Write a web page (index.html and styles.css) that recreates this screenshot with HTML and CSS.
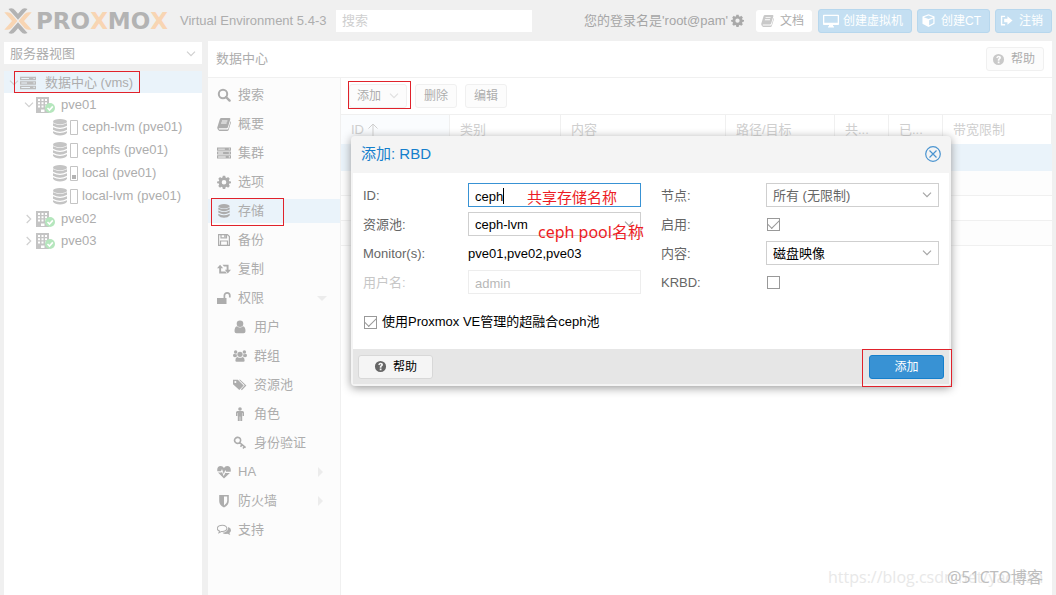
FILE: index.html
```
<!DOCTYPE html>
<html lang="zh-CN">
<head>
<meta charset="utf-8">
<title>Proxmox Virtual Environment</title>
<link rel="stylesheet" href="styles.css">
</head>
<body>
<svg class="defs" aria-hidden="true">
<symbol id="search" viewBox="0 0 14 14"><circle cx="6" cy="6" r="4.2" fill="none" stroke="currentColor" stroke-width="2"/><path d="M9 9l3.6 3.6" stroke="currentColor" stroke-width="2.4" stroke-linecap="round"/></symbol>
<symbol id="book" viewBox="0 0 14 14"><path fill-rule="evenodd" d="M4.300 1h8.200q1.100.3.8 1.300l-2.400 8q-.4 1-1.400 1H2.200q-.6 0-.5.6.2.6 1 .6h7.800q.6 0 .8-.7l2.300-7.500q.7.5.3 1.400l-2.200 7q-.4 1.300-1.600 1.300H2.400Q.6 13 .3 11.200q-.1-.8.2-1.500L2.900 2q.4-1 1.400-1zM5 3.400l-.3 1h5.500l.3-1zm-.7 2.200l-.3 1h5.500l.3-1z"/></symbol>
<symbol id="server" viewBox="0 0 16 14"><path fill-rule="evenodd" d="M0 .8h16v3.500H0zM1.300 2v1H9V2zM13.500 1.900v1.200h1.200V1.900zM0 5.300h16v3.400H0zm1.300 1.200v1H7v-1zm12.200-.2v1.200h1.200V6.300zM0 9.700h16v3.500H0zM1.300 11v1H10v-1zm12.200-.2V12h1.200v-1.200z"/></symbol>
<symbol id="gear" viewBox="0 0 14 14"><path fill-rule="evenodd" d="M5.800.8h2.400l.4 1.700 1 .4L11.100 2l1.700 1.700-.9 1.500.4 1 1.700.3V8.200l-1.700.4-.4 1 .9 1.400-1.700 1.700-1.500-.9-1 .4-.4 1.700H5.800l-.4-1.700-1-.4-1.400.9L1.300 11l.9-1.400-.4-1L.1 8.200V6.500l1.700-.3.4-1-.9-1.500L3 2l1.400.9 1-.4zM7 4.900a2.300 2.300 0 100 4.600 2.300 2.300 0 000-4.600z"/></symbol>
<symbol id="database" viewBox="0 0 14 16"><ellipse cx="7" cy="2.500" rx="6.500" ry="2.500"/><path d="M.5 4q6.500 3.500 13 0v2.300q-6.500 4-13 0zM.5 7.500q6.500 3.500 13 0v2.300q-6.500 4-13 0zM.5 11q6.500 3.500 13 0v2q-2 2.700-6.500 2.700T.5 13z"/></symbol>
<symbol id="floppy" viewBox="0 0 14 14"><path fill="none" stroke="currentColor" stroke-width="1.200" d="M1.600 1.600h8.800l2 2v8.800H1.600zM4 1.600v3.200h5.500V1.600M3.500 12.400V8h7v4.400"/><path d="M7.200 1.800h1.500v2.500H7.200z"/></symbol>
<symbol id="retweet" viewBox="0 0 16 14"><path d="M3.500 2L7 6.200H4.700v3.700h5l1.600 2.100H2.500V6.200H0zM6.300 2H13.200v5.800H16l-3.700 4.200L9 7.800h2V4.100H8z"/></symbol>
<symbol id="unlock" viewBox="0 0 14 14"><path d="M0 7h9.500v6H0z"/><path fill="none" stroke="currentColor" stroke-width="1.700" d="M7.400 7V4.500a2.700 2.700 0 015.400 0v2"/></symbol>
<symbol id="user" viewBox="0 0 14 14"><circle cx="7" cy="3.800" r="3.300"/><path d="M4 6.300q3 2.500 6 0 2.500.6 2.500 4.900 0 2.100-2 2.100H3.500q-2 0-2-2.100 0-4.300 2.500-4.900z"/></symbol>
<symbol id="users" viewBox="0 0 16 14"><circle cx="8" cy="5" r="3"/><circle cx="3" cy="2.500" r="2"/><circle cx="13" cy="2.500" r="2"/><path d="M5 8q3 2 6 0 2.300.5 2.300 4 0 1.500-1.500 1.500H4.200Q2.700 13.500 2.700 12 2.700 8.500 5 8zM1.500 4.400q1.300.8 2.600.3 0 1.800 1 2.700-1 .1-1.700.8Q0 8.700 0 6.800q0-2.200 1.500-2.400zm13 0q-1.300.8-2.600.3 0 1.800-1 2.700 1 .1 1.700.8Q16 8.700 16 6.800q0-2.200-1.500-2.400z"/></symbol>
<symbol id="tags" viewBox="0 0 16 14"><path fill-rule="evenodd" d="M0 1h5.500l6.700 6.500-5 5.300L0 6zm2.700 1.300a1.200 1.200 0 100 2.400 1.200 1.200 0 000-2.400z"/><path d="M6.800 1h1.400l7.100 6.500-5.200 5.400-1-1 4.300-4.500z"/></symbol>
<symbol id="male" viewBox="0 0 14 14"><circle cx="7" cy="2" r="1.800"/><path d="M4.500 4h5q1.500 0 1.500 1.500V9H9.600V6h-.4v8H7.300V9.500h-.6V14H4.800V6h-.4v3H3V5.500Q3 4 4.500 4z"/></symbol>
<symbol id="key" viewBox="0 0 14 14"><path fill="none" stroke="currentColor" stroke-width="1.600" d="M6.600 6.600a3 3 0 10-4.600-3.700 3 3 0 004.600 3.700l6 5M9 8.700l-1.500 2M11.500 10.600L10 12.500"/></symbol>
<symbol id="heart" viewBox="0 0 14 14"><path fill-rule="evenodd" d="M7 3Q5.800 1 3.700 1 .2 1.200.2 5q0 .7.2 1.200H4L5 4l1.700 5L8.300 5l.8 1.800h4.500q.3-.8.2-1.800-.2-3.800-3.700-4Q8.200 1 7 3zM1 7.500h3.500L5 6.800l1.700 4.500L8.400 7.500l.2.500h4.300L7 13.500z"/></symbol>
<symbol id="shield" viewBox="0 0 14 14"><path fill-rule="evenodd" d="M2.200 1h9.600v6q0 4-4.800 6.500Q2.200 11 2.200 7zM7 2.600v9Q10.200 9.700 10.200 7V2.600z"/></symbol>
<symbol id="comments" viewBox="0 0 16 14"><path fill="none" stroke="currentColor" stroke-width="1.200" d="M6.200 1.600C-.6 1.600-.9 6.700 2.800 8.200L2.200 10.200l2.800-1.500C13.200 9.400 13.200 1.600 6.200 1.600z"/><path d="M12.800 3.600Q16 4.800 16 7.200q0 1.900-1.800 3.100l1 2.400-3.300-1.400q-4 .6-5.700-1.300 7-.2 6.600-6.400z"/></symbol>
<symbol id="help" viewBox="0 0 14 14"><path fill-rule="evenodd" d="M7 1a6 6 0 100 12A6 6 0 007 1zM4.500 5.200Q5 3 7.200 3q2.500.2 2.500 2.200 0 1.200-1.600 2v1.100H6.200Q6 6.500 7.100 6q1.300-.8.200-1.300-.8-.3-1.300 1zM6.200 9.200h1.900V11H6.200z"/></symbol>
<symbol id="desktop" viewBox="0 0 16 14"><path fill-rule="evenodd" d="M.8.800h14.400q.8 0 .8.800v8.600q0 .8-.8.800H10v1.200h1V13.500H5V12.200h1V11H.8Q0 11 0 10.200V1.600Q0 .8.800.8zM1.300 2v6.700h13.400V2z"/></symbol>
<symbol id="cube" viewBox="0 0 14 14"><path fill-rule="evenodd" d="M7 .3l6.500 2.500v7.800L7 13.900.5 10.600V2.800zm0 1.300L2 3.500l5 2 5-2zM7.700 12l4.500-2.200V4.900L7.700 6.800z"/></symbol>
<symbol id="signout" viewBox="0 0 14 14"><path fill="none" stroke="currentColor" stroke-width="1.500" d="M5.500 2.500H1.700v9h3.800"/><path d="M8 2.500L13.500 7 8 11.500V9H4.500V5H8z"/></symbol>
<symbol id="down" viewBox="0 0 10 6"><path fill="none" stroke="currentColor" stroke-width="1.200" d="M1 .7l4 4 4-4"/></symbol>
<symbol id="right" viewBox="0 0 6 10"><path fill="none" stroke="currentColor" stroke-width="1.200" d="M.7 1l4 4-4 4"/></symbol>
<symbol id="node" viewBox="0 0 20 16"><path fill="#c4c4c4" fill-rule="evenodd" d="M0 0h13v16H0zM2 2v2h2V2zm3.500 0v2h2V2zM9 2v2h2V2zM2 5.300v2h2v-2zm3.500 0v2h2v-2zm3.500 0v2h2v-2zM2 8.600v2h2v-2zm3.500 0v2h2v-2zm3.500 0v2h2v-2zM5 12.500V15h3.500v-2.500z"/><circle cx="14" cy="11" r="5" fill="#b5e6bd"/><path fill="none" stroke="#fff" stroke-width="1.600" d="M11.500 11l2 2 3.300-3.600"/></symbol>
<symbol id="store" viewBox="0 0 26 17"><g fill="#c4c4c4"><ellipse cx="7" cy="2.700" rx="7" ry="2.700"/><path d="M0 4.300q7 3.600 14 0v2.500q-7 4-14 0zM0 8.300q7 3.600 14 0v2.500q-7 4-14 0zM0 12.300q7 3.600 14 0v1.500q-2 2.700-7 2.700t-7-2.700z"/></g><path fill="#fff" stroke="#c4c4c4" d="M17.500 1.500h7v14h-7z"/></symbol>
</svg>

<header class="top">
  <div class="brand">
    <svg class="mark" viewBox="0 0 28 26"><path fill="#b3b3b3" d="M4.500 1q4-1.800 6.500 1.200l3 3.600 3-3.600Q19.500-.8 23.500 1L14 11.800zM4.500 25q4 1.800 6.500-1.200l3-3.600 3 3.600q2.500 3 6.500 1.200L14 14.200z"/><path fill="#f8d5b3" d="M.3 4.300h3.200Q5.900 4.300 7.500 6l6 7-6 7q-1.600 1.700-4 1.700H.3L8 13zM27.700 4.300h-3.200Q22.100 4.300 20.500 6l-6 7 6 7q1.600 1.700 4 1.700h3.200L20 13z"/></svg>
    <span class="word">PRO<b>X</b>MO<b>X</b></span>
  </div>
  <span class="version">Virtual Environment 5.4-3</span>
  <input class="find" type="text" placeholder="搜索" aria-label="搜索">
  <span class="login">您的登录名是'root@pam'</span>
  <svg class="ic cog"><use href="#gear"/></svg>
  <button class="btn docs"><svg class="ic"><use href="#book"/></svg>文档</button>
  <button class="btn blue"><svg class="ic wide"><use href="#desktop"/></svg>创建虚拟机</button>
  <button class="btn blue"><svg class="ic"><use href="#cube"/></svg>创建CT</button>
  <button class="btn blue"><svg class="ic"><use href="#signout"/></svg>注销</button>
</header>

<div class="work">
  <aside class="tree">
    <div class="view"><select aria-label="视图"><option>服务器视图</option></select><svg class="chev"><use href="#down"/></svg></div>
    <ul>
      <li class="root"><svg class="chev"><use href="#down"/></svg><svg class="rack"><use href="#server"/></svg>数据中心 (vms)</li>
      <li class="node"><svg class="chev"><use href="#down"/></svg><svg class="host"><use href="#node"/></svg>pve01</li>
      <li class="disk"><svg><use href="#store"/></svg>ceph-lvm (pve01)</li>
      <li class="disk"><svg><use href="#store"/></svg>cephfs (pve01)</li>
      <li class="disk"><svg viewBox="0 0 26 17"><use href="#store"/><path fill="#b3b3b3" d="M19 10h4v4h-4z"/></svg>local (pve01)</li>
      <li class="disk"><svg><use href="#store"/></svg>local-lvm (pve01)</li>
      <li class="node"><svg class="chev"><use href="#right"/></svg><svg class="host"><use href="#node"/></svg>pve02</li>
      <li class="node"><svg class="chev"><use href="#right"/></svg><svg class="host"><use href="#node"/></svg>pve03</li>
    </ul>
  </aside>

  <main class="panel">
    <div class="title"><h1>数据中心</h1><button class="btn"><svg class="ic"><use href="#help"/></svg>帮助</button></div>
    <div class="split">
      <nav class="menu">
        <a href="#"><svg class="ic"><use href="#search"/></svg>搜索</a>
        <a href="#"><svg class="ic"><use href="#book"/></svg>概要</a>
        <a href="#"><svg class="ic"><use href="#server"/></svg>集群</a>
        <a href="#"><svg class="ic"><use href="#gear"/></svg>选项</a>
        <a href="#" class="on"><svg class="ic"><use href="#database"/></svg>存储</a>
        <a href="#"><svg class="ic"><use href="#floppy"/></svg>备份</a>
        <a href="#"><svg class="ic"><use href="#retweet"/></svg>复制</a>
        <a href="#"><svg class="ic"><use href="#unlock"/></svg>权限<i class="tri open"></i></a>
        <a href="#" class="sub"><svg class="ic"><use href="#user"/></svg>用户</a>
        <a href="#" class="sub"><svg class="ic"><use href="#users"/></svg>群组</a>
        <a href="#" class="sub"><svg class="ic"><use href="#tags"/></svg>资源池</a>
        <a href="#" class="sub"><svg class="ic"><use href="#male"/></svg>角色</a>
        <a href="#" class="sub"><svg class="ic"><use href="#key"/></svg>身份验证</a>
        <a href="#"><svg class="ic"><use href="#heart"/></svg>HA<i class="tri"></i></a>
        <a href="#"><svg class="ic"><use href="#shield"/></svg>防火墙<i class="tri"></i></a>
        <a href="#"><svg class="ic"><use href="#comments"/></svg>支持</a>
      </nav>
      <section class="grid">
        <div class="tools">
          <button class="btn">添加<svg class="chev"><use href="#down"/></svg></button>
          <button class="btn">删除</button>
          <button class="btn">编辑</button>
        </div>
        <table>
          <colgroup><col class="c1"><col class="c2"><col class="c3"><col class="c4"><col class="c5"><col class="c5"><col></colgroup>
          <thead><tr><th>ID<svg class="sort" viewBox="0 0 10 14"><path fill="none" stroke="currentColor" d="M5.500 14V1M1 5.500l4.500-4.500L10 5.500"/></svg></th><th>类别</th><th>内容</th><th>路径/目标</th><th>共...</th><th>已...</th><th>带宽限制</th></tr></thead>
          <tbody>
            <tr class="sel"><td colspan="7"></td></tr>
            <tr><td colspan="7"></td></tr>
            <tr><td colspan="7"></td></tr>
            <tr><td colspan="7"></td></tr>
          </tbody>
        </table>
      </section>
    </div>
  </main>
</div>

<form class="dialog" role="dialog" aria-labelledby="dlg">
  <div class="bar"><h2 id="dlg">添加: RBD</h2>
    <button type="button" class="close" aria-label="关闭"><svg viewBox="0 0 16 16"><path fill="none" stroke="#4a94d0" stroke-width="1.200" d="M8 .7a7.300 7.300 0 100 14.600A7.300 7.300 0 008 .7zM4.500 4.500l7 7M11.500 4.500l-7 7"/></svg></button></div>
  <div class="body">
    <div class="cols">
      <div class="col">
        <div class="row"><label for="id">ID:</label><span class="field"><input class="box focus" id="id" type="text" value="ceph"><i class="caret"></i></span></div>
        <div class="row"><label for="pool">资源池:</label><span class="field"><select class="box" id="pool"><option>ceph-lvm</option></select><svg class="chev"><use href="#down"/></svg></span></div>
        <div class="row"><label for="mon">Monitor(s):</label><output class="field" id="mon">pve01,pve02,pve03</output></div>
        <div class="row off"><label for="user-name">用户名:</label><span class="field"><input class="box" id="user-name" type="text" value="admin" disabled></span></div>
      </div>
      <div class="col">
        <div class="row"><label for="nodes">节点:</label><span class="field"><select class="box dim" id="nodes"><option>所有 (无限制)</option></select><svg class="chev"><use href="#down"/></svg></span></div>
        <div class="row"><label for="enable">启用:</label><span class="field tick"><input type="checkbox" id="enable" checked></span></div>
        <div class="row"><label for="content">内容:</label><span class="field"><select class="box" id="content"><option>磁盘映像</option></select><svg class="chev"><use href="#down"/></svg></span></div>
        <div class="row"><label for="krbd">KRBD:</label><span class="field tick"><input type="checkbox" id="krbd"></span></div>
      </div>
    </div>
    <div class="row managed"><input type="checkbox" id="managed" checked><label for="managed">使用Proxmox VE管理的超融合ceph池</label></div>
  </div>
  <div class="foot"><button type="button" class="btn"><svg class="ic"><use href="#help"/></svg>帮助</button><button type="button" class="btn go">添加</button></div>
</form>

<i class="mark-box at-root"></i><i class="mark-box at-menu"></i><i class="mark-box at-tool"></i><i class="mark-box at-go"></i>
<span class="note n1">共享存储名称</span><span class="note n2">ceph pool名称</span>
<span class="wm url">https://blog.csdn.net/yacaizh</span><span class="wm cto">@51CTO博客</span>
</body>
</html>
```
FILE: styles.css
```
* { box-sizing: border-box; }
body { margin: 0; min-height: 100vh; display: flex; flex-direction: column; background: #f0f0f0; color: #adadad; font: 13px/18px "Liberation Sans", "Noto Sans CJK SC", sans-serif; position: relative; overflow: hidden; }
button, input, select { font: inherit; color: inherit; margin: 0; }
ul { list-style: none; margin: 0; padding: 0; }
svg { fill: currentColor; flex: none; }
.defs { position: absolute; width: 0; height: 0; }
.ic { width: 13px; height: 13px; }
.ic.wide { width: 16px; height: 14px; }
.chev { width: 10px; height: 10px; color: #d0d0d0; }

.btn { display: flex; align-items: center; justify-content: center; height: 24px; padding: 0 11px; border: 1px solid #f0f0f0; border-radius: 3px; background: #fcfcfc; font-size: 12px; white-space: nowrap; gap: 6px; }
.btn .ic { color: #c9c9c9; }

.top { display: flex; align-items: center; height: 41px; padding: 0 4px; flex: none; }
.brand { display: flex; align-items: center; gap: 4px; width: 176px; flex: none; }
.mark { width: 28px; height: 26px; }
.word { font: bold 23px/26px "DejaVu Sans", sans-serif; color: #b3b3b3; }
.word b { color: #f8d5b3; }
.version { width: 156px; flex: none; white-space: nowrap; }
.find { width: 196px; height: 22px; border: 0; padding: 0 6px; background: #fff; }
.find::placeholder { color: #cfcfcf; opacity: 1; }
.login { margin-left: auto; margin-right: 3px; color: #a6a6a6; }
.cog { margin-right: 12px; color: #a9a9a9; }
.top .btn { margin-left: 5px; flex: none; }
.top .docs { height: 22px; margin: 0 1px 0 0; padding: 0 8px 0 5px; border: 0; background: #fff; }
.top .blue { padding: 0 8px 0 4px; background: #c4dff2; border-color: #b7d7ed; color: #fff; }
.top .blue .ic { color: #fff; }
.top .blue .wide { margin-right: -2px; }

.work { display: flex; flex: 1; gap: 6px; padding: 0 4px; min-height: 0; }
.tree { width: 198px; flex: none; background: #fff; border-top: 1px solid #f0f0f0; display: flex; flex-direction: column; }
.view { position: relative; height: 29px; border-bottom: 7px solid #f0f0f0; }
.view select { width: 100%; height: 22px; border: 0; background: #fff; padding: 1px 6px 0; appearance: none; }
.view .chev { position: absolute; right: 6px; top: 7px; }
.tree li { display: flex; align-items: center; height: 22px; padding-top: 1px; white-space: nowrap; }
.tree .root { background: #eaf3fa; padding-left: 5px; }
.rack { width: 16px; height: 14px; margin: 0 9px 0 1px; color: #bdbdbd; }
.node { padding-left: 20px; }
.host { width: 20px; height: 16px; margin: 0 5px 0 2px; }
.tree .disk { height: 23px; padding-left: 49px; }
.disk svg { width: 26px; height: 17px; margin-right: 3px; }

.panel { flex: 1; min-width: 0; background: #fff; display: flex; flex-direction: column; }
.title { display: flex; align-items: center; justify-content: space-between; height: 37px; padding: 0 8px; border-bottom: 1px solid #f0f0f0; flex: none; }
.title h1 { margin: 0; font-size: 13px; font-weight: normal; }
.title .btn { padding: 0 8px 0 5px; }
.split { display: flex; flex: 1; min-height: 0; }
.menu { width: 133px; flex: none; display: flex; flex-direction: column; gap: 5px; padding-top: 5px; background: #fcfcfc; border-right: 1px solid #f0f0f0; }
.menu a { display: flex; align-items: center; gap: 7px; height: 24px; padding: 0 17px 0 9px; color: inherit; text-decoration: none; flex: none; }
.menu .ic { width: 14px; height: 14px; }
.menu .sub { padding-left: 25px; }
.menu .on { background: #eaf3fa; }
.tri { margin-left: auto; border: 5px solid transparent; border-left-color: #ececec; border-right-width: 0; }
.tri.open { border: 5px solid transparent; border-top-color: #ececec; border-bottom-width: 0; margin-right: -4px; }
.grid { flex: 1; min-width: 0; }
.tools { display: flex; align-items: center; gap: 8px; height: 37px; padding: 0 8px; border-bottom: 1px solid #f0f0f0; }
.tools .btn { padding: 0 8px; width: 42px; }
.tools .btn:first-child { width: 58px; gap: 8px; }
.tools .chev { color: #e0e0e0; }
table { width: 100%; table-layout: fixed; border-collapse: separate; border-spacing: 0; }
.c1 { width: 109px; } .c2 { width: 111px; } .c3 { width: 165px; } .c4 { width: 109px; } .c5 { width: 54px; }
th { height: 29px; padding: 0 10px; text-align: left; font-weight: normal; color: #cfcfcf; border-right: 1px solid #f0f0f0; white-space: nowrap; }
th:first-child { background: #fafcfe; }
.sort { width: 11px; height: 14px; margin-left: 3px; vertical-align: middle; }
td { height: 25px; padding: 0; border-bottom: 1px solid #f0f0f0; }
.sel td { height: 27px; background: #eaf3fa; border: 0; }
tr:nth-child(even) td, tr:last-child td { background: #fdfdfd; }

.dialog { position: absolute; left: 351px; top: 136px; width: 600px; border: 2px solid #f4f4f4; border-radius: 4px; background: #fff; box-shadow: 0 2px 10px 0 #999; color: #666; }
.bar { display: flex; align-items: center; justify-content: space-between; height: 35px; padding: 0 8px 4px; background: #f4f4f4; }
.bar h2 { margin: 0; font-size: 15px; font-weight: normal; color: #157fcc; }
.close { border: 0; padding: 0; background: none; width: 16px; height: 16px; }
.close svg { display: block; width: 16px; height: 16px; }
.body { padding: 10px; }
.cols { display: grid; grid-template-columns: 1fr 1fr; gap: 20px; }
.col { display: grid; gap: 5px; }
.row { display: flex; align-items: center; height: 24px; }
.cols label { width: 105px; flex: none; padding-top: 1px; }
.field { position: relative; display: block; flex: 1; min-width: 0; color: #000; }
output.field { padding-top: 1px; }
.box { display: block; width: 100%; height: 24px; padding: 2px 6px 0; border: 1px solid #cfcfcf; border-radius: 0; background: #fff; appearance: none; }
.box.focus { border-color: #3892d4; }
.box.dim { color: #666; }
.field .chev { position: absolute; right: 7px; top: 7px; color: #a5a5a5; }
.caret { position: absolute; left: 35px; top: 5px; width: 1px; height: 16px; background: #000; }
.off label { color: #c7c7c7; }
.off .box { color: #b8b8b8; border-color: #ededed; }
input[type="checkbox"] { appearance: none; width: 13px; height: 13px; border: 1px solid #999; background: #fff; display: grid; place-items: center; flex: none; }
input[type="checkbox"]:checked::after { content: ""; width: 10px; height: 5px; border: solid #999; border-width: 0 0 1px 1px; transform: rotate(-45deg); margin-bottom: 3px; }
.tick { padding-left: 1px; }
.managed { margin: 16px 0 5px 1px; color: #000; gap: 5px; }
.foot { display: flex; align-items: center; justify-content: space-between; height: 35px; padding: 0 5px; background: #e6e6e6; }
.foot .btn { width: 75px; background: #f5f5f5; border-color: #d8d8d8; color: #000; }
.foot .ic { color: #666; }
.foot .go { background: #3892d4; border-color: #157fcc; color: #fff; }

.mark-box { position: absolute; border: 1px solid #e0222b; pointer-events: none; }
.at-root { left: 14px; top: 71px; width: 126px; height: 22px; }
.at-menu { left: 211px; top: 198px; width: 73px; height: 28px; }
.at-tool { left: 348px; top: 81px; width: 63px; height: 28px; }
.at-go { left: 862px; top: 349px; width: 90px; height: 38px; }
.note { position: absolute; color: #ed1c24; font: 15px/20px "Noto Sans", "Noto Sans CJK SC", sans-serif; white-space: nowrap; }
.n1 { left: 527px; top: 187px; }
.n2 { left: 538px; top: 222px; font-size: 16px; }
.wm { position: absolute; top: 567px; font: 16px/20px "Open Sans", "Noto Sans CJK SC", sans-serif; white-space: nowrap; }
.url { left: 828px; color: #e8e8e8; }
.cto { left: 947px; color: #bdbdbd; }
```
